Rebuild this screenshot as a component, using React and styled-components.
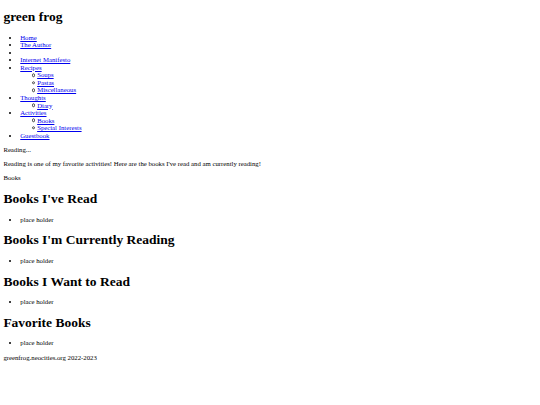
import React from "react";
import styled, { createGlobalStyle } from "styled-components";

const Global = createGlobalStyle`
  html { font-size: 6.75px; }
  body {
    margin: 0 0.5rem 0.5rem;
    font-family: "Liberation Serif", "Times New Roman", serif;
    font-size: 1rem;
    line-height: 1.117;
    color: #000;
    background: #fff;
  }
`;

const Title = styled.h1`
  font-size: 2em;
  font-weight: bold;
  line-height: 1.16;
  margin: 0.67em 0;
`;

const List = styled.ul`
  margin: ${(p) => (p.$nested ? "0" : "1em 0")};
  padding-left: 2.5em;
  list-style-type: ${(p) => (p.$nested ? "none" : "disc")};
`;

const Item = styled.li``;

const SubItem = styled.li`
  position: relative;
  &::before {
    content: "";
    position: absolute;
    left: -5.2px;
    top: 50%;
    width: 1.5px;
    height: 1.5px;
    border: 0.5px solid #444;
    border-radius: 50%;
    transform: translateY(-50%);
  }
`;

const Link = styled.a`
  color: #0000ee;
  text-decoration: underline;
`;

const Para = styled.p`
  margin: 1em 0;
`;

const Footer = styled.footer`
  margin: 1em 0;
`;

const nav = [
  { label: "Home" },
  { label: "The Author" },
  { label: "" },
  { label: "Internet Manifesto" },
  { label: "Recipes", children: ["Soups", "Pastas", "Miscellaneous"] },
  { label: "Thoughts", children: ["Diary"] },
  { label: "Activities", children: ["Books", "Special Interests"] },
  { label: "Guestbook" },
];

const sections = [
  "Books I've Read",
  "Books I'm Currently Reading",
  "Books I Want to Read",
  "Favorite Books",
];

export default function App() {
  return (
    <>
      <Global />
      <Title>green frog</Title>
      <List>
        {nav.map((n, i) => (
          <Item key={i}>
            {n.label ? <Link href="#">{n.label}</Link> : null}
            {n.children && (
              <List $nested>
                {n.children.map((c) => (
                  <SubItem key={c}>
                    <Link href="#">{c}</Link>
                  </SubItem>
                ))}
              </List>
            )}
          </Item>
        ))}
      </List>
      <Para>Reading...</Para>
      <Para>
        Reading is one of my favorite activities! Here are the books I've read
        and am currently reading!
      </Para>
      <Para>Books</Para>
      {sections.map((s) => (
        <React.Fragment key={s}>
          <Title>{s}</Title>
          <List>
            <Item>place holder</Item>
          </List>
        </React.Fragment>
      ))}
      <Footer>greenfrog.neocities.org 2022-2023</Footer>
    </>
  );
}
